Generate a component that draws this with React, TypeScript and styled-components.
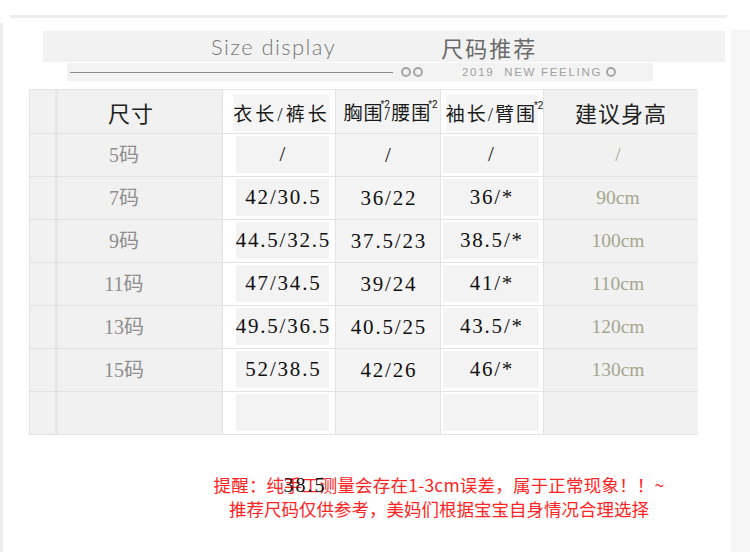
import React from "react";
import styled, { createGlobalStyle } from "styled-components";

const Global = createGlobalStyle`
  html, body { margin: 0; padding: 0; background: #fff; }
  #root { width: 750px; height: 552px; }
`;

const Page = styled.div`
  width: 750px;
  height: 552px;
  overflow: hidden;
  display: flex;
  flex-direction: column;
  background:
    linear-gradient(#ececec, #ececec) 0 23px / 3px 100% no-repeat,
    linear-gradient(#f6f6f6, #f6f6f6) 731px 30px / 19px 100% no-repeat,
    #fff;
`;

const TopRule = styled.div`
  margin: 15px 0 0 10px;
  width: 717px;
  height: 3px;
  background: #ededed;
`;

const TitleBand = styled.div`
  margin: 13px 0 0 43px;
  width: 682px;
  height: 31px;
  background: #f2f2f2;
  display: flex;
  align-items: center;
  padding-left: 168px;
  box-sizing: border-box;
  gap: 105px;
`;

const TitleEn = styled.span`
  font-family: "Lato", "Open Sans", sans-serif;
  font-weight: 300;
  font-size: 22px;
  color: #777;
  letter-spacing: 1.4px;
`;

const TitleCn = styled.span`
  font-family: "Noto Sans CJK SC", sans-serif;
  font-size: 22px;
  color: #6a6a6a;
  letter-spacing: 2px;
`;

const SubBand = styled.div`
  margin: 1px 0 0 67px;
  width: 586px;
  height: 18px;
  background: #f3f3f3;
  display: flex;
  align-items: center;
`;

const SubLine = styled.div`
  margin-left: 3px;
  width: 323px;
  height: 1px;
  background: #8c8c8c;
`;

const Ring = styled.span<{ $ml: number }>`
  display: inline-block;
  width: 6px;
  height: 6px;
  border: 2px solid #a6a6a6;
  border-radius: 50%;
  margin-left: ${(p) => p.$ml}px;
  flex: none;
`;

const SubText = styled.span`
  margin-left: 39px;
  font-family: "Liberation Sans", "Open Sans", sans-serif;
  font-size: 11.5px;
  color: #a0a0a0;
  letter-spacing: 1.7px;
  white-space: pre;
`;

const Table = styled.div`
  margin: 8px 0 0 29px;
  width: 668px;
  display: grid;
  grid-template-columns: 193px 113px 105px 103px 154px;
  grid-auto-rows: 43px;
  border-top: 1px solid #e6e6e6;
  border-bottom: 1px solid #e2e2e2;
  border-left: 1px solid #e4e4e4;
  border-right: 1px solid #e8e8e8;
  box-sizing: border-box;
`;

type Kind = "size" | "len" | "mid" | "arm" | "height";

const bg: Record<Kind, string> = {
  size: "#f1f1f1",
  len: "#ffffff",
  mid: "#f4f4f4",
  arm: "#ffffff",
  height: "#f1f1f1",
};

const cellPadding = (kind: Kind, head?: boolean) => {
  if (head) return "0";
  if (kind === "len") return "2px 6px 3px 13px";
  if (kind === "arm") return "2px 4px 3px 2px";
  return "0";
};

const Cell = styled.div<{ $kind: Kind; $head?: boolean }>`
  position: relative;
  display: flex;
  align-items: center;
  justify-content: center;
  box-sizing: border-box;
  background: ${(p) => bg[p.$kind]};
  border-top: ${(p) => (p.$head ? "none" : "1px solid #e2e2e2")};
  border-right: ${(p) => (p.$kind === "height" ? "none" : "1px solid #e3e3e3")};
  padding: ${(p) => cellPadding(p.$kind, p.$head)};
  ${(p) =>
    p.$kind === "size"
      ? `background-image: linear-gradient(to right, transparent 25px, #e7e7e7 25px, #e7e7e7 28px, transparent 28px);`
      : ""}
`;

const Inset = styled.div<{ $head?: "len" | "arm" }>`
  flex: 1;
  align-self: stretch;
  background: ${(p) => (p.$head ? "#f5f5f5" : "#f3f3f3")};
  display: flex;
  align-items: center;
  justify-content: center;
  margin: ${(p) =>
    p.$head === "len" ? "4px 7px 2px 12px" : p.$head === "arm" ? "4px 10px 2px 10px" : "0"};
`;

const HeadSans = styled.span<{ $shift?: number }>`
  font-family: "Noto Sans CJK SC", sans-serif;
  font-size: 22px;
  color: #222;
  letter-spacing: 1px;
  margin-left: ${(p) => p.$shift ?? 0}px;
`;

const HeadSerif = styled.span<{ $ls?: number }>`
  font-family: "Liberation Serif", "Noto Sans CJK SC", serif;
  font-size: 19px;
  color: #1a1a1a;
  letter-spacing: ${(p) => p.$ls ?? 1}px;
  white-space: nowrap;
`;

const Sup = styled.sup`
  font-family: "Liberation Sans", sans-serif;
  font-size: 10px;
  line-height: 0;
  vertical-align: 0;
  position: relative;
  top: -12px;
  margin: 0 -5px 0 -3px;
  color: #111;
  letter-spacing: 0;
`;

const SizeLabel = styled.span`
  font-family: "Liberation Serif", "Noto Sans CJK SC", serif;
  font-size: 20px;
  color: #8e8e8e;
  margin: -3px 0 0 -4px;
`;

const Num = styled.span`
  font-family: "Liberation Serif", "Times New Roman", serif;
  font-size: 21px;
  color: #111;
  letter-spacing: 1.8px;
  white-space: nowrap;
  margin-right: -1.8px;
`;

const Height = styled.span`
  font-family: "Liberation Serif", serif;
  font-size: 19.5px;
  color: #a6a68e;
  margin-left: -6px;
`;

const Notes = styled.div`
  margin-top: 38px;
  padding-left: 128px;
  width: 622px;
  display: flex;
  flex-direction: column;
  align-items: center;
  font-family: "Noto Sans CJK SC", sans-serif;
  font-size: 17.5px;
  line-height: 24px;
  color: #ff2424;
`;

const NoteLine = styled.div<{ $ls?: number }>`
  position: relative;
  white-space: nowrap;
  letter-spacing: ${(p) => p.$ls ?? 0}px;
`;

const Overlay = styled.span`
  position: absolute;
  left: 70px;
  top: 0;
  font-family: "Liberation Serif", serif;
  font-size: 20px;
  color: #111;
  letter-spacing: 2px;
`;

const rows: [string, string, string, string, string][] = [
  ["5码", "/", "/", "/", "/"],
  ["7码", "42/30.5", "36/22", "36/*", "90cm"],
  ["9码", "44.5/32.5", "37.5/23", "38.5/*", "100cm"],
  ["11码", "47/34.5", "39/24", "41/*", "110cm"],
  ["13码", "49.5/36.5", "40.5/25", "43.5/*", "120cm"],
  ["15码", "52/38.5", "42/26", "46/*", "130cm"],
  ["", "", "", "", ""],
];

export default function App() {
  return (
    <>
      <Global />
      <Page>
        <TopRule />
        <TitleBand>
          <TitleEn>Size display</TitleEn>
          <TitleCn>尺码推荐</TitleCn>
        </TitleBand>
        <SubBand>
          <SubLine />
          <Ring $ml={8} />
          <Ring $ml={2} />
          <SubText>2019  NEW FEELING</SubText>
          <Ring $ml={4} />
        </SubBand>
        <Table>
          <Cell $kind="size" $head>
            <HeadSans $shift={10}>尺寸</HeadSans>
          </Cell>
          <Cell $kind="len" $head>
            <Inset $head="len">
              <HeadSerif $ls={3}>衣长/裤长</HeadSerif>
            </Inset>
          </Cell>
          <Cell $kind="mid" $head>
            <HeadSerif>
              胸围<Sup>*2</Sup>/腰围<Sup>*2</Sup>
            </HeadSerif>
          </Cell>
          <Cell $kind="arm" $head>
            <Inset $head="arm">
              <HeadSerif $ls={2}>
                袖长/臂围<Sup>*2</Sup>
              </HeadSerif>
            </Inset>
          </Cell>
          <Cell $kind="height" $head>
            <HeadSans>建议身高</HeadSans>
          </Cell>
          {rows.map((r, i) => (
            <React.Fragment key={i}>
              <Cell $kind="size">
                <SizeLabel>{r[0]}</SizeLabel>
              </Cell>
              <Cell $kind="len">
                <Inset>
                  <Num>{r[1]}</Num>
                </Inset>
              </Cell>
              <Cell $kind="mid">
                <Num>{r[2]}</Num>
              </Cell>
              <Cell $kind="arm">
                <Inset>
                  <Num>{r[3]}</Num>
                </Inset>
              </Cell>
              <Cell $kind="height">
                <Height>{r[4]}</Height>
              </Cell>
            </React.Fragment>
          ))}
        </Table>
        <Notes>
          <NoteLine $ls={0.2}>
            提醒：纯手工测量会存在1-3cm误差，属于正常现象！！~
            <Overlay>38.5</Overlay>
          </NoteLine>
          <NoteLine>推荐尺码仅供参考，美妈们根据宝宝自身情况合理选择</NoteLine>
        </Notes>
      </Page>
    </>
  );
}
